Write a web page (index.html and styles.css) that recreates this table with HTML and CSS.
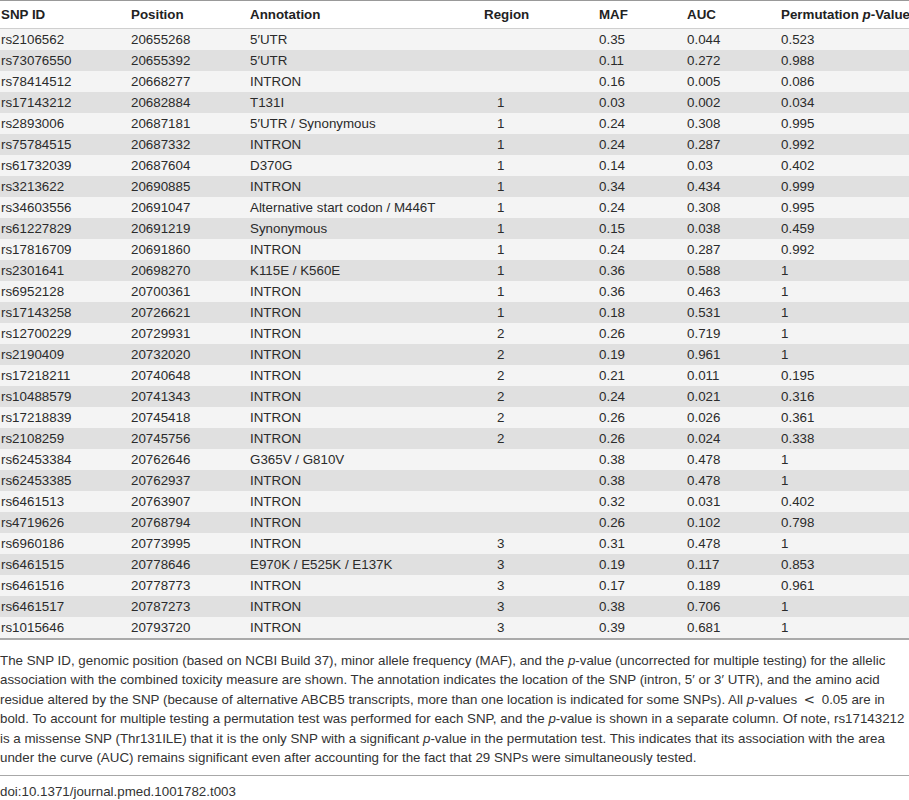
FILE: index.html
```html
<!DOCTYPE html>
<html lang="en">

<head>
    <meta charset="UTF-8">
    <title>SNP table</title>
    <link rel="stylesheet" href="styles.css">
</head>

<body>
    <table class="snp-table">
        <colgroup>
            <col class="c-id">
            <col class="c-pos">
            <col class="c-ann">
            <col class="c-reg">
            <col class="c-maf">
            <col class="c-auc">
            <col class="c-perm">
        </colgroup>
        <thead>
            <tr>
                <th>SNP ID</th>
                <th>Position</th>
                <th>Annotation</th>
                <th class="region">Region</th>
                <th>MAF</th>
                <th>AUC</th>
                <th>Permutation <i>p</i>-Value</th>
            </tr>
        </thead>
        <tbody>
            <tr><td>rs2106562</td><td>20655268</td><td>5′UTR</td><td class="region"></td><td>0.35</td><td>0.044</td><td>0.523</td></tr>
            <tr><td>rs73076550</td><td>20655392</td><td>5′UTR</td><td class="region"></td><td>0.11</td><td>0.272</td><td>0.988</td></tr>
            <tr><td>rs78414512</td><td>20668277</td><td>INTRON</td><td class="region"></td><td>0.16</td><td>0.005</td><td>0.086</td></tr>
            <tr><td>rs17143212</td><td>20682884</td><td>T131I</td><td class="region">1</td><td>0.03</td><td>0.002</td><td>0.034</td></tr>
            <tr><td>rs2893006</td><td>20687181</td><td>5′UTR / Synonymous</td><td class="region">1</td><td>0.24</td><td>0.308</td><td>0.995</td></tr>
            <tr><td>rs75784515</td><td>20687332</td><td>INTRON</td><td class="region">1</td><td>0.24</td><td>0.287</td><td>0.992</td></tr>
            <tr><td>rs61732039</td><td>20687604</td><td>D370G</td><td class="region">1</td><td>0.14</td><td>0.03</td><td>0.402</td></tr>
            <tr><td>rs3213622</td><td>20690885</td><td>INTRON</td><td class="region">1</td><td>0.34</td><td>0.434</td><td>0.999</td></tr>
            <tr><td>rs34603556</td><td>20691047</td><td>Alternative start codon / M446T</td><td class="region">1</td><td>0.24</td><td>0.308</td><td>0.995</td></tr>
            <tr><td>rs61227829</td><td>20691219</td><td>Synonymous</td><td class="region">1</td><td>0.15</td><td>0.038</td><td>0.459</td></tr>
            <tr><td>rs17816709</td><td>20691860</td><td>INTRON</td><td class="region">1</td><td>0.24</td><td>0.287</td><td>0.992</td></tr>
            <tr><td>rs2301641</td><td>20698270</td><td>K115E / K560E</td><td class="region">1</td><td>0.36</td><td>0.588</td><td>1</td></tr>
            <tr><td>rs6952128</td><td>20700361</td><td>INTRON</td><td class="region">1</td><td>0.36</td><td>0.463</td><td>1</td></tr>
            <tr><td>rs17143258</td><td>20726621</td><td>INTRON</td><td class="region">1</td><td>0.18</td><td>0.531</td><td>1</td></tr>
            <tr><td>rs12700229</td><td>20729931</td><td>INTRON</td><td class="region">2</td><td>0.26</td><td>0.719</td><td>1</td></tr>
            <tr><td>rs2190409</td><td>20732020</td><td>INTRON</td><td class="region">2</td><td>0.19</td><td>0.961</td><td>1</td></tr>
            <tr><td>rs17218211</td><td>20740648</td><td>INTRON</td><td class="region">2</td><td>0.21</td><td>0.011</td><td>0.195</td></tr>
            <tr><td>rs10488579</td><td>20741343</td><td>INTRON</td><td class="region">2</td><td>0.24</td><td>0.021</td><td>0.316</td></tr>
            <tr><td>rs17218839</td><td>20745418</td><td>INTRON</td><td class="region">2</td><td>0.26</td><td>0.026</td><td>0.361</td></tr>
            <tr><td>rs2108259</td><td>20745756</td><td>INTRON</td><td class="region">2</td><td>0.26</td><td>0.024</td><td>0.338</td></tr>
            <tr><td>rs62453384</td><td>20762646</td><td>G365V / G810V</td><td class="region"></td><td>0.38</td><td>0.478</td><td>1</td></tr>
            <tr><td>rs62453385</td><td>20762937</td><td>INTRON</td><td class="region"></td><td>0.38</td><td>0.478</td><td>1</td></tr>
            <tr><td>rs6461513</td><td>20763907</td><td>INTRON</td><td class="region"></td><td>0.32</td><td>0.031</td><td>0.402</td></tr>
            <tr><td>rs4719626</td><td>20768794</td><td>INTRON</td><td class="region"></td><td>0.26</td><td>0.102</td><td>0.798</td></tr>
            <tr><td>rs6960186</td><td>20773995</td><td>INTRON</td><td class="region">3</td><td>0.31</td><td>0.478</td><td>1</td></tr>
            <tr><td>rs6461515</td><td>20778646</td><td>E970K / E525K / E137K</td><td class="region">3</td><td>0.19</td><td>0.117</td><td>0.853</td></tr>
            <tr><td>rs6461516</td><td>20778773</td><td>INTRON</td><td class="region">3</td><td>0.17</td><td>0.189</td><td>0.961</td></tr>
            <tr><td>rs6461517</td><td>20787273</td><td>INTRON</td><td class="region">3</td><td>0.38</td><td>0.706</td><td>1</td></tr>
            <tr><td>rs1015646</td><td>20793720</td><td>INTRON</td><td class="region">3</td><td>0.39</td><td>0.681</td><td>1</td></tr>
        </tbody>
    </table>

    <p class="caption">The SNP ID, genomic position (based on NCBI Build 37), minor allele frequency (MAF), and the <i>p</i>-value (uncorrected for multiple testing) for the allelic association with the combined toxicity measure are shown. The annotation indicates the location of the SNP (intron, 5′ or 3′ UTR), and the amino acid residue altered by the SNP (because of alternative ABCB5 transcripts, more than one location is indicated for some SNPs). All <i>p</i>-values <span class="lt">&lt;</span> 0.05 are in bold. To account for multiple testing a permutation test was performed for each SNP, and the <i>p</i>-value is shown in a separate column. Of note, rs17143212 is a missense SNP (Thr131ILE) that it is the only SNP with a significant <i>p</i>-value in the permutation test. This indicates that its association with the area under the curve (AUC) remains significant even after accounting for the fact that 29 SNPs were simultaneously tested.</p>

    <p class="doi">doi:10.1371/journal.pmed.1001782.t003</p>
</body>

</html>
```

FILE: styles.css
```css
body {
    margin: 0;
    font-family: "Liberation Sans", Arial, sans-serif;
    font-size: 13.35px;
    color: #2b2b2b;
    background: white;
}

.snp-table {
    width: 909px;
    border-collapse: collapse;
    table-layout: fixed;
    border-top: 1px solid #999;
    border-bottom: 2px solid #aaa;
}

.c-id { width: 130px; }
.c-pos { width: 119px; }
.c-ann { width: 234px; }
.c-reg { width: 115px; }
.c-maf { width: 88px; }
.c-auc { width: 94px; }

.snp-table th,
.snp-table td {
    padding: 0 0 0 1px;
    text-align: left;
    white-space: nowrap;
    overflow: visible;
}

.snp-table th {
    height: 27px;
    font-weight: bold;
    color: #222;
    border-bottom: 1px solid #cfcfcf;
}

.snp-table td {
    height: 21px;
}

.snp-table td.region {
    padding-left: 14px;
}

.snp-table tbody tr:nth-child(odd) {
    background: #f4f4f4;
}

.snp-table tbody tr:nth-child(even) {
    background: #e0e0e0;
}

.caption {
    margin: 11px 0 0;
    padding-bottom: 8px;
    line-height: 19.4px;
    border-bottom: 1px solid #a8a8a8;
    color: #333;
}

/* math-style less-than, wider than the text glyph */
.lt {
    padding: 0 3px;
    font-family: "DejaVu Serif", serif;
}

.doi {
    margin: 6px 0 0;
    line-height: 19px;
    color: #333;
}
```
